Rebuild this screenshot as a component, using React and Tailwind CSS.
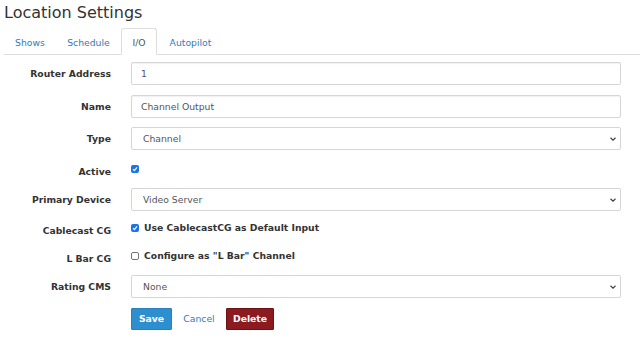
import React from "react";

const Check = ({ checked }) =>
  checked ? (
    <span className="flex items-center justify-center w-[8px] h-[8px] rounded-[2px] bg-[#1a73e8] shrink-0">
      <svg width="6" height="6" viewBox="0 0 6 6">
        <path d="M1 3.2 L2.4 4.6 L5 1.4" stroke="#fff" strokeWidth="1.2" fill="none" />
      </svg>
    </span>
  ) : (
    <span className="block w-[8px] h-[8px] rounded-[2px] border border-[#767676] bg-white shrink-0" />
  );

const Chevron = () => (
  <svg width="6" height="4" viewBox="0 0 6 4" className="absolute right-[4px] top-1/2 -translate-y-1/2">
    <path d="M0.5 0.8 L3 3.2 L5.5 0.8" stroke="#444" strokeWidth="1.2" fill="none" />
  </svg>
);

const Label = ({ children, className = "" }) => (
  <div className={`w-[111px] shrink-0 text-right font-bold text-[#333] leading-[11px] ${className}`}>
    {children}
  </div>
);

const TextField = ({ value }) => (
  <div className="flex-1 h-[23px] flex items-center pl-[9px] border border-[#d6d6d6] rounded-[2px] bg-white shadow-[inset_0_1px_1px_rgba(0,0,0,0.06)] text-[#555]">
    {value}
  </div>
);

const SelectField = ({ value }) => (
  <div className="relative flex-1 h-[23px] flex items-center pl-[11px] border border-[#d6d6d6] rounded-[2px] bg-white text-[#555]">
    {value}
    <Chevron />
  </div>
);

const tabs = [
  { name: "Shows", w: "w-[52px]" },
  { name: "Schedule", w: "w-[65px]" },
  { name: "I/O", w: "w-[36px]", active: true },
  { name: "Autopilot", w: "w-[67px]" },
];

export default function App() {
  return (
    <div className="w-[640px] h-[342px] bg-white overflow-hidden font-['DejaVu_Sans',sans-serif] text-[9.25px]">
      <h1 className="mt-[4px] ml-[4px] text-[16px] leading-[18px] text-[#333]">Location Settings</h1>

      <div className="mt-[6px] ml-[4px] flex border-b border-[#ddd]">
        {tabs.map((t) => (
          <div
            key={t.name}
            className={`${t.w} -mb-px h-[27px] pt-[2px] flex items-center justify-center rounded-t-[3px] border ${
              t.active
                ? "border-[#ddd] border-b-white bg-white text-[#555]"
                : "border-transparent text-[#337ab7]"
            }`}
          >
            {t.name}
          </div>
        ))}
      </div>

      <div className="pt-[7px] pr-[19px]">
        <div className="flex items-center gap-[20px]">
          <Label>Router Address</Label>
          <TextField value="1" />
        </div>
        <div className="mt-[10px] flex items-center gap-[20px]">
          <Label>Name</Label>
          <TextField value="Channel Output" />
        </div>
        <div className="mt-[9px] flex items-center gap-[20px]">
          <Label>Type</Label>
          <SelectField value="Channel" />
        </div>
        <div className="mt-[10px] h-[20px] flex items-start gap-[20px]">
          <Label className="pt-[6px]">Active</Label>
          <div className="pt-[5px]">
            <Check checked />
          </div>
        </div>
        <div className="mt-[8px] flex items-center gap-[20px]">
          <Label>Primary Device</Label>
          <SelectField value="Video Server" />
        </div>
        <div className="mt-[11px] h-[16px] flex items-start gap-[20px]">
          <Label className="pt-[3px]">Cablecast CG</Label>
          <div className="flex items-center gap-[5px] leading-[11px] font-bold text-[#333]">
            <Check checked />
            <span>Use CablecastCG as Default Input</span>
          </div>
        </div>
        <div className="mt-[12px] h-[16px] flex items-start gap-[20px]">
          <Label className="pt-[3px]">L Bar CG</Label>
          <div className="flex items-center gap-[5px] leading-[11px] font-bold text-[#333]">
            <Check />
            <span>Configure as "L Bar" Channel</span>
          </div>
        </div>
        <div className="mt-[9px] flex items-center gap-[20px]">
          <Label>Rating CMS</Label>
          <SelectField value="None" />
        </div>
        <div className="mt-[10px] flex gap-[20px]">
          <div className="w-[111px] shrink-0" />
          <div className="flex items-center gap-[3px]">
            <button className="w-[41px] h-[22px] bg-[#2e8fd0] border border-[#2a80bb] rounded-[1px] text-white font-bold">
              Save
            </button>
            <button className="w-[48px] h-[22px] text-[#337ab7]">Cancel</button>
            <button className="w-[48px] h-[22px] bg-[#8b1b1f] border border-[#6b1216] rounded-[1px] text-white font-bold">
              Delete
            </button>
          </div>
        </div>
      </div>
    </div>
  );
}
